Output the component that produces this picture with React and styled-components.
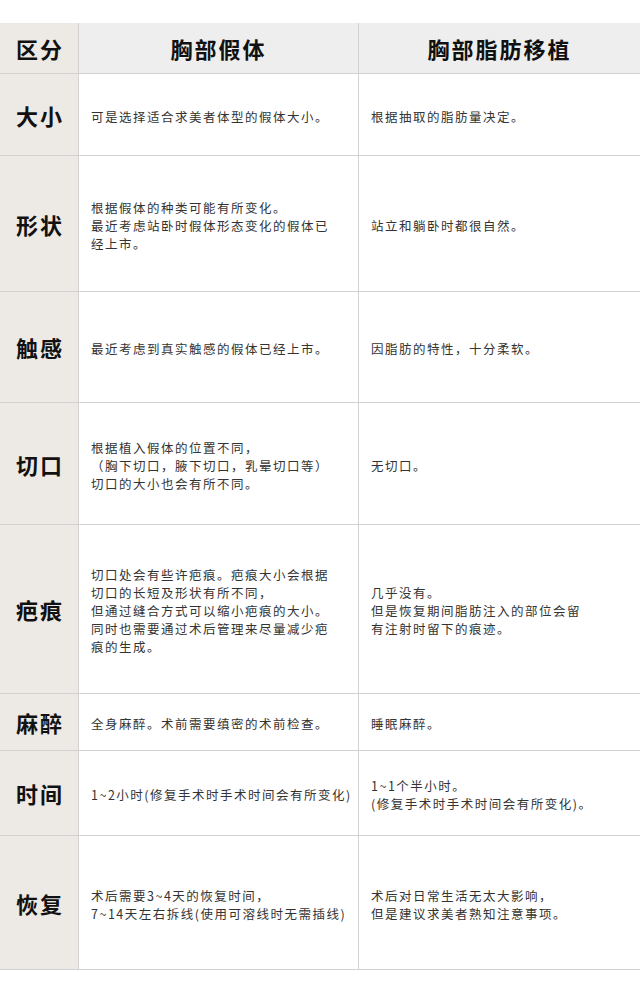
import React from "react";
import styled, { createGlobalStyle } from "styled-components";

const Global = createGlobalStyle`
  html, body { margin: 0; padding: 0; background: #ffffff; }
  body { font-family: "Noto Sans CJK SC", "Noto Sans", sans-serif; }
`;

const Page = styled.div`
  padding-top: 23px;
  width: 640px;
`;

const Table = styled.div`
  display: grid;
  grid-template-columns: 79px 280px 281px;
`;

const Cell = styled.div`
  box-sizing: border-box;
  height: ${(p) => p.$h}px;
  border-bottom: 1px solid #d2d2d2;
  border-right: ${(p) => (p.$last ? "none" : "1px solid #d2d2d2")};
  display: flex;
  align-items: center;
`;

const LabelCell = styled(Cell)`
  background: #ede9e4;
  justify-content: center;
  font-size: 22px;
  font-weight: 700;
  letter-spacing: 2px;
  color: #111111;
  padding-left: 2px;
`;

const HeadCell = styled(Cell)`
  background: #eeeeee;
  justify-content: center;
  font-size: 22px;
  font-weight: 700;
  letter-spacing: 2px;
  color: #111111;
`;

const BodyCell = styled(Cell)`
  background: #ffffff;
  padding: 4px 2px 0 12px;
`;

const Text = styled.div`
  font-size: 12.5px;
  line-height: 18px;
  letter-spacing: 1.5px;
  color: #333333;
  white-space: nowrap;
`;

const rows = [
  {
    label: "大小",
    h: 82,
    a: ["可是选择适合求美者体型的假体大小。"],
    b: ["根据抽取的脂肪量决定。"],
  },
  {
    label: "形状",
    h: 136,
    a: ["根据假体的种类可能有所变化。", "最近考虑站卧时假体形态变化的假体已", "经上市。"],
    b: ["站立和躺卧时都很自然。"],
  },
  {
    label: "触感",
    h: 111,
    a: ["最近考虑到真实触感的假体已经上市。"],
    b: ["因脂肪的特性，十分柔软。"],
  },
  {
    label: "切口",
    h: 122,
    a: ["根据植入假体的位置不同，", "（胸下切口，腋下切口，乳晕切口等）", "切口的大小也会有所不同。"],
    b: ["无切口。"],
  },
  {
    label: "疤痕",
    h: 169,
    a: [
      "切口处会有些许疤痕。疤痕大小会根据",
      "切口的长短及形状有所不同，",
      "但通过缝合方式可以缩小疤痕的大小。",
      "同时也需要通过术后管理来尽量减少疤",
      "痕的生成。",
    ],
    b: ["几乎没有。", "但是恢复期间脂肪注入的部位会留", "有注射时留下的痕迹。"],
  },
  {
    label: "麻醉",
    h: 57,
    a: ["全身麻醉。术前需要缜密的术前检查。"],
    b: ["睡眠麻醉。"],
  },
  {
    label: "时间",
    h: 85,
    a: ["1~2小时(修复手术时手术时间会有所变化)"],
    b: ["1~1个半小时。", "(修复手术时手术时间会有所变化)。"],
  },
  {
    label: "恢复",
    h: 134,
    a: ["术后需要3~4天的恢复时间，", "7~14天左右拆线(使用可溶线时无需插线)"],
    b: ["术后对日常生活无太大影响，", "但是建议求美者熟知注意事项。"],
  },
];

const Lines = ({ lines }) => (
  <Text>
    {lines.map((l, i) => (
      <React.Fragment key={i}>
        {i > 0 && <br />}
        {l}
      </React.Fragment>
    ))}
  </Text>
);

export default function App() {
  return (
    <>
      <Global />
      <Page>
        <Table>
          <LabelCell $h={51}>区分</LabelCell>
          <HeadCell $h={51}>胸部假体</HeadCell>
          <HeadCell $h={51} $last>胸部脂肪移植</HeadCell>
          {rows.map((r) => (
            <React.Fragment key={r.label}>
              <LabelCell $h={r.h}>{r.label}</LabelCell>
              <BodyCell $h={r.h}>
                <Lines lines={r.a} />
              </BodyCell>
              <BodyCell $h={r.h} $last>
                <Lines lines={r.b} />
              </BodyCell>
            </React.Fragment>
          ))}
        </Table>
      </Page>
    </>
  );
}
